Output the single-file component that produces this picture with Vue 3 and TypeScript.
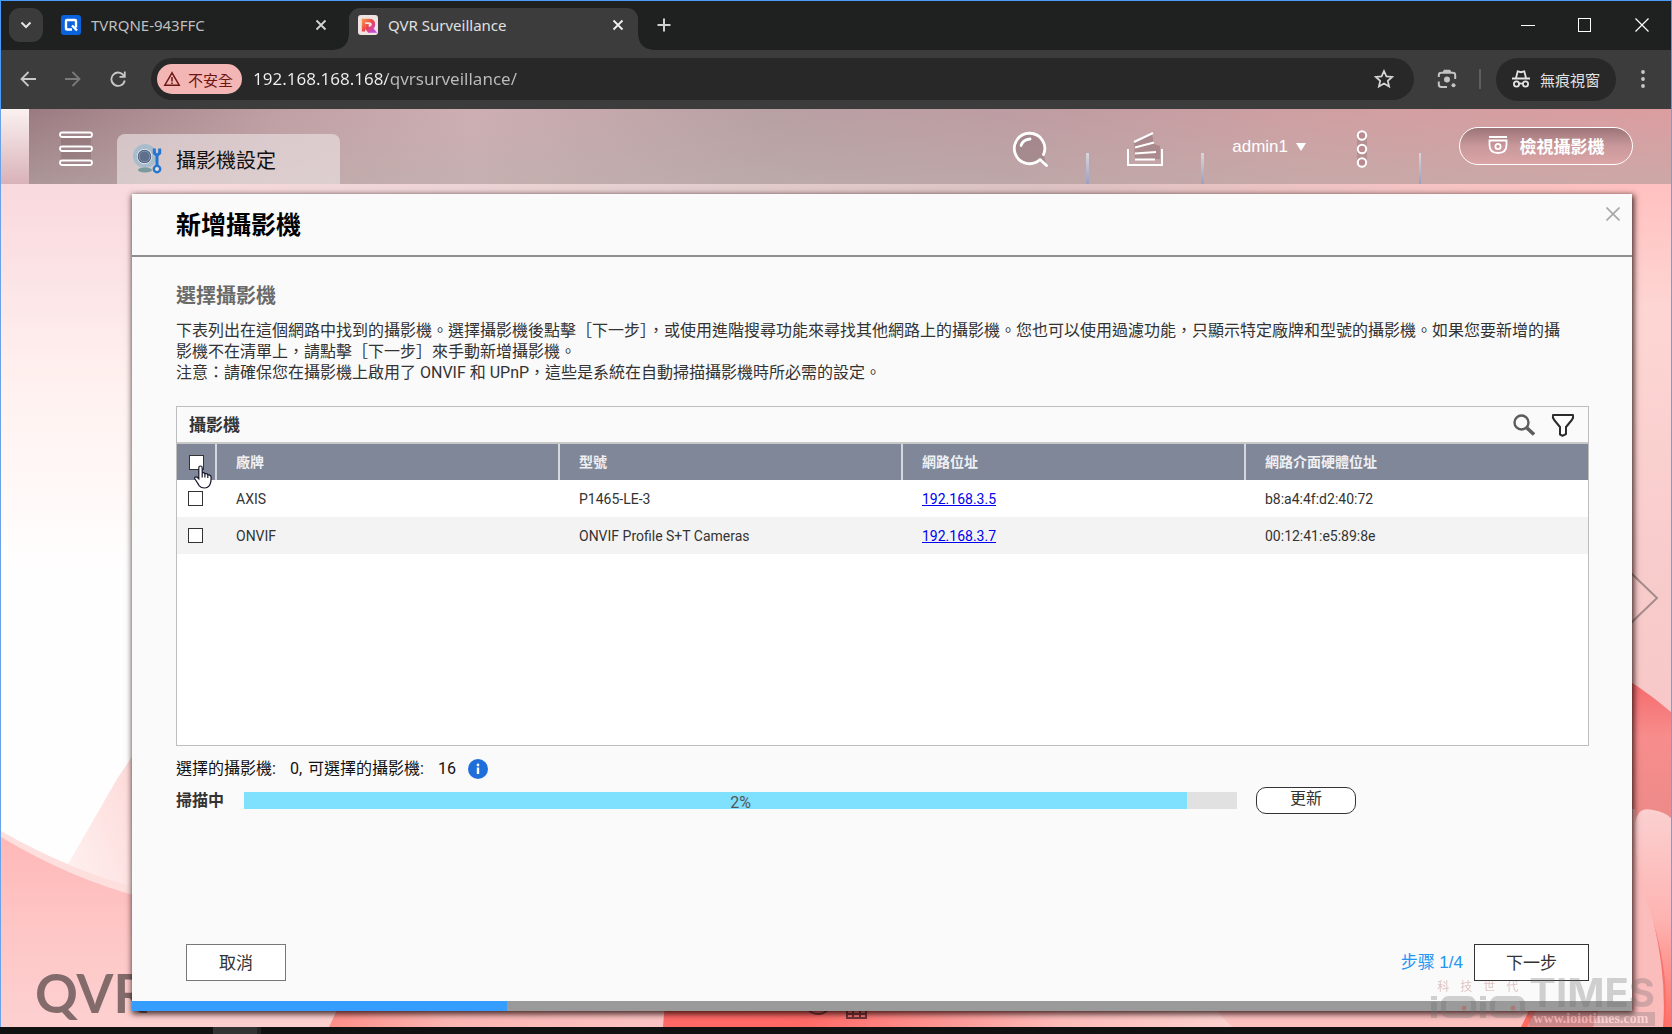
<script setup lang="ts">
import { computed, ref } from 'vue'

interface Camera {
  brand: string
  model: string
  ip: string
  mac: string
  selected: boolean
}

const url = ref('192.168.168.168/qvrsurveillance/')

const columns: string[] = ['廠牌', '型號', '網路位址', '網路介面硬體位址']

const cameras = ref<Camera[]>([
  { brand: 'AXIS', model: 'P1465-LE-3', ip: '192.168.3.5', mac: 'b8:a4:4f:d2:40:72', selected: false },
  { brand: 'ONVIF', model: 'ONVIF Profile S+T Cameras', ip: '192.168.3.7', mac: '00:12:41:e5:89:8e', selected: false },
])

const selectedCount = computed(() => cameras.value.filter((c) => c.selected).length)
const allSelected = computed({
  get: () => selectedCount.value === cameras.value.length,
  set: (on: boolean) => cameras.value.forEach((c) => (c.selected = on)),
})

const available = 16
const scanLabel = '2%'
const scanFill = 95
const step = 1
const stepCount = 4
</script>

<template>
  <div class="window">
    <header class="tabstrip">
      <button class="tab-search" aria-label="搜尋分頁">
        <svg width="12" height="8" viewBox="0 0 12 8"><path d="M1.5 1.5 6 6l4.500-4.500" fill="none" stroke="#e4e4e4" stroke-width="2" /></svg>
      </button>
      <div class="tab">
        <svg width="20" height="20" viewBox="0 0 20 20">
          <rect width="20" height="20" rx="3" fill="#0a63dc" />
          <path d="M11 14.500H6a1 1 0 0 1-1-1V6a1 1 0 0 1 1-1h8a1 1 0 0 1 1 1v6.500M11 10.500l5 5" fill="none" stroke="#fff" stroke-width="2.400" />
        </svg>
        <span class="tab-title">TVRQNE-943FFC</span>
        <button class="icon-btn" aria-label="關閉分頁">
          <svg width="12" height="12" viewBox="0 0 12 12"><path d="m1.500 1.500 9 9m0-9-9 9" stroke="#d5d5d5" stroke-width="1.800" /></svg>
        </button>
      </div>
      <div class="tab active">
        <svg width="20" height="20" viewBox="0 0 20 20">
          <defs>
            <linearGradient id="fav" x1="0" y1="0" x2="1" y2="1">
              <stop offset="0" stop-color="#f58a4c" /><stop offset=".5" stop-color="#ee3f4a" /><stop offset="1" stop-color="#c44be0" />
            </linearGradient>
          </defs>
          <rect width="20" height="20" rx="3" fill="#f0e4e2" />
          <path d="M5.500 16.500V5.500H11q4.500 0 4.500 4 0 2.500-2.500 3.500l2.500 3H11L9 13.500V9" fill="none" stroke="url(#fav)" stroke-width="3.400" />
        </svg>
        <span class="tab-title">QVR Surveillance</span>
        <button class="icon-btn" aria-label="關閉分頁">
          <svg width="12" height="12" viewBox="0 0 12 12"><path d="m1.500 1.500 9 9m0-9-9 9" stroke="#f0f0f0" stroke-width="1.800" /></svg>
        </button>
      </div>
      <button class="icon-btn new-tab" aria-label="新分頁">
        <svg width="14" height="14" viewBox="0 0 14 14"><path d="M7 .5v13M.5 7h13" stroke="#d0d0d0" stroke-width="2" /></svg>
      </button>
      <div class="win-controls">
        <button class="icon-btn" aria-label="最小化"><svg width="14" height="14"><path d="M0 7.500h14" stroke="#fff" /></svg></button>
        <button class="icon-btn" aria-label="最大化"><svg width="14" height="14"><rect x=".5" y=".5" width="12" height="13" fill="none" stroke="#fff" /></svg></button>
        <button class="icon-btn" aria-label="關閉"><svg width="14" height="14"><path d="m.5.5 13 13m0-13-13 13" stroke="#fff" stroke-width="1.200" /></svg></button>
      </div>
    </header>

    <nav class="toolbar">
      <button class="icon-btn" aria-label="上一頁"><svg width="16" height="16" viewBox="0 0 16 16"><path d="M8.500 1 1.500 8l7 7M1.500 8H16" fill="none" stroke="#c8c8c8" stroke-width="1.800" /></svg></button>
      <button class="icon-btn" aria-label="下一頁"><svg width="16" height="16" viewBox="0 0 16 16"><path d="m7.500 1 7 7-7 7M14.500 8H0" fill="none" stroke="#7a7a7a" stroke-width="1.800" /></svg></button>
      <button class="icon-btn" aria-label="重新載入"><svg width="16" height="16" viewBox="0 0 16 16"><path d="M14 5A6.700 6.700 0 1 0 14.700 9.500M14.800.5v5.300H9.500" fill="none" stroke="#c8c8c8" stroke-width="1.800" /></svg></button>
      <div class="omnibox">
        <button class="chip">
          <svg width="18" height="16" viewBox="0 0 18 16"><path d="M9 1.800 1.800 14.200h14.400zM9 6v4.500M9 11.500v1.500" fill="none" stroke="#6d1614" stroke-width="1.500" /></svg>
          不安全
        </button>
        <input v-model="url" class="url" type="text" aria-label="網址" />
        <button class="icon-btn" aria-label="加入書籤">
          <svg width="20" height="20" viewBox="0 0 20 20"><path d="m10 2 2.400 5.400 5.800.5-4.400 3.900 1.300 5.800L10 14.600l-5.100 3 1.300-5.800L1.800 7.900l5.800-.5z" fill="none" stroke="#d6d6d6" stroke-width="1.700" /></svg>
        </button>
      </div>
      <button class="icon-btn lens" aria-label="智慧鏡頭">
        <svg width="20" height="20" viewBox="0 0 20 20" fill="none" stroke="#c4c4c4" stroke-width="2">
          <path d="M1.800 8V6.200a2.400 2.400 0 0 1 2.400-2.400h11.600a2.400 2.400 0 0 1 2.400 2.400V10M1.800 12.500v3a2.400 2.400 0 0 0 2.400 2.400H10M6.500 3.500 7.500 1.800h5l1 1.700" />
          <circle cx="10" cy="10.500" r="3" fill="#c4c4c4" stroke="none" /><circle cx="16.500" cy="16.300" r="2" fill="#c4c4c4" stroke="none" />
        </svg>
      </button>
      <span class="bar-sep"></span>
      <button class="incognito">
        <svg width="18" height="18" viewBox="0 0 18 18" fill="none" stroke="#e3e3e3" stroke-width="1.800">
          <path d="M0 8.500h18M4 8l1.700-6.600 3.300.8 3.300-.8L14 8" /><circle cx="4.500" cy="14" r="2.600" /><circle cx="13.500" cy="14" r="2.600" /><path d="M7 13.500h4" />
        </svg>
        無痕視窗
      </button>
      <button class="icon-btn" aria-label="選單">
        <svg width="4" height="18" viewBox="0 0 4 18" fill="#c8c8c8"><circle cx="2" cy="2" r="1.900" /><circle cx="2" cy="9" r="1.900" /><circle cx="2" cy="16" r="1.900" /></svg>
      </button>
    </nav>

    <main class="desktop">
      <svg class="wallpaper" viewBox="0 0 1670 918" preserveAspectRatio="none" aria-hidden="true">
        <defs>
          <linearGradient id="base" x1="0" y1="0" x2="0" y2="1">
            <stop offset="0" stop-color="#f6d6da" /><stop offset=".1" stop-color="#f9dadf" /><stop offset=".3" stop-color="#fff1ef" /><stop offset=".5" stop-color="#fffefe" />
          </linearGradient>
          <linearGradient id="corner" x1="0" y1="0" x2="0" y2="1">
            <stop offset="0" stop-color="#fbf1f1" /><stop offset="1" stop-color="#d8b2b8" />
          </linearGradient>
          <linearGradient id="strip">
            <stop offset="0" stop-color="#f9dcdf" /><stop offset=".35" stop-color="#e6cfd0" /><stop offset=".6" stop-color="#dcc2c3" /><stop offset=".85" stop-color="#f5c4c4" /><stop offset="1" stop-color="#ffc1c0" />
          </linearGradient>
          <linearGradient id="side" x1="0" y1="0" x2="0" y2="1">
            <stop offset="0" stop-color="#ffb9b9" /><stop offset=".1" stop-color="#ffc3c2" /><stop offset=".22" stop-color="#fdd6d3" /><stop offset=".48" stop-color="#f8cccc" /><stop offset="1" stop-color="#f9c0c0" />
          </linearGradient>
          <linearGradient id="wave" x1="0" y1="0" x2="0" y2="1">
            <stop offset="0" stop-color="#ffb8b8" /><stop offset=".5" stop-color="#fec6c6" /><stop offset="1" stop-color="#fdd0d0" />
          </linearGradient>
          <linearGradient id="ray" x1="1" y1="0" x2="0" y2="1">
            <stop offset="0" stop-color="#fcd2d0" /><stop offset="1" stop-color="#fff6f6" />
          </linearGradient>
          <linearGradient id="coral" x1="0" y1="0" x2="0" y2="1">
            <stop offset="0" stop-color="#f55f62" /><stop offset=".2" stop-color="#f78d8c" /><stop offset=".5" stop-color="#e98a88" /><stop offset="1" stop-color="#ff6a60" />
          </linearGradient>
          <linearGradient id="petal" x1="0" y1="0" x2="0" y2="1">
            <stop offset="0" stop-color="#fbd0d0" /><stop offset=".5" stop-color="#fdb4b2" /><stop offset="1" stop-color="#ff6f66" />
          </linearGradient>
          <linearGradient id="floor">
            <stop offset="0" stop-color="#ff8e88" /><stop offset=".35" stop-color="#fbb6b3" /><stop offset="1" stop-color="#fbc4c4" />
          </linearGradient>
          <linearGradient id="floor2">
            <stop offset="0" stop-color="#ff6966" /><stop offset=".25" stop-color="#ff6a67" /><stop offset=".7" stop-color="#fdbcba" /><stop offset="1" stop-color="#fdd2d0" />
          </linearGradient>
        </defs>
        <rect width="1670" height="918" fill="url(#base)" />
        <rect width="28" height="75" fill="url(#corner)" />
        <rect x="132" width="1500" height="100" fill="url(#strip)" />
        <rect x="1620" width="50" height="918" fill="url(#side)" />
        <path d="M66 757 116 670l40-60v230z" fill="url(#ray)" />
        <path d="M0 722q70 40 140 58v140H0z" fill="#fde0de" />
        <path d="M0 728q70 42 140 60v130H0z" fill="url(#wave)" />
        <rect y="880" x="130" width="1540" height="38" fill="#fdd0d0" />
        <path d="M328 918l18-38h320v38z" fill="url(#floor)" />
        <path d="M662 918l3-38h530l36 38z" fill="url(#floor2)" />
        <path d="M1195 880h475v38h-439z" fill="#fcc2c0" />
        <path d="M1600 555q40 22 70 48v315h-150l30-60z" fill="url(#coral)" />
        <path d="M1600 880V700h34q2 60 18 110 14 60 10 108h-62z" fill="#fbbcbc" />
        <path d="M1634 720q0-24 18-19 12 2 18 8v209h-6q6-60-20-130-10-30-10-68z" fill="url(#petal)" />
        <path d="M1526 918q6-14 20-28h60v28z" fill="#ef8f8f" />
        <path d="M1606 880h56v38h-70z" fill="#fbbcbc" />
        <path d="m1630 464 26 25-26 25" fill="none" stroke="#a48c8c" stroke-width="2" />
        <path d="M806 899q4 6 11 6t10-5M846 898v12M865 898v12M845 905h21M845 909h21M852 898v11M859 898v11" fill="none" stroke="#5a2c30" stroke-width="2" opacity=".85" />
      </svg>
      <div class="qvr" aria-hidden="true">QVR</div>

      <div class="appbar">
        <button class="icon-btn burger" aria-label="主選單">
          <svg width="34" height="36" viewBox="0 0 34 36">
            <rect x="2" y="4" width="30" height="28" fill="#5b3f46" opacity=".22" />
            <g fill="#a2878c" stroke="#fff" stroke-width="1.800"><rect x="1" y="1.500" width="32" height="4.500" rx="2.200" /><rect x="1" y="15.500" width="32" height="4.500" rx="2.200" /><rect x="1" y="29.500" width="32" height="4.500" rx="2.200" /></g>
          </svg>
        </button>
        <a class="app-tab" href="#camera-settings">
          <svg width="30" height="30" viewBox="0 0 30 30">
            <circle cx="12" cy="12" r="12" fill="#a9bccb" /><ellipse cx="12" cy="26" rx="7" ry="2.500" fill="#7b9a9b" />
            <circle cx="11.500" cy="12.500" r="7.500" fill="#eef2f6" /><circle cx="11.500" cy="12.500" r="6.800" fill="#465673" /><circle cx="11.500" cy="12.500" r="5.400" fill="#5d6f8d" stroke="#8f9cb4" />
            <path d="M21.300 4.500v4.500L24 11.500 26.700 9V4.500M24 11v11" fill="none" stroke="#2476cf" stroke-width="3" /><circle cx="24" cy="25" r="3.200" fill="#e9e0e2" stroke="#2476cf" stroke-width="2.400" />
          </svg>
          攝影機設定
        </a>
        <div class="app-tools">
          <button class="icon-btn search" aria-label="搜尋">
            <svg width="36" height="36" viewBox="0 0 36 36" fill="none" stroke="#fff" stroke-linecap="round">
              <path d="M30.500 23.500A15.200 15.200 0 1 0 27 28.500l6.500 6" stroke-width="2.800" stroke-linejoin="round" fill="#5b3f46" fill-opacity=".25" /><path d="M8 14.500Q10 8.500 17 8" stroke-width="2.800" />
            </svg>
          </button>
          <span class="tick"></span>
          <button class="icon-btn tray" aria-label="工作">
            <svg width="36" height="36" viewBox="0 0 36 36" fill="none" stroke="#fff" stroke-width="2">
              <path d="M7 11 25 3l2 10 6 2v13H8z" fill="#5b3f46" opacity=".25" stroke="none" /><path d="M1 18v16h34V18M7 11l19-9M8 16.500l19-5M8 22.500 29 21M8 28.500h20" />
            </svg>
          </button>
          <span class="tick"></span>
          <button class="admin">admin1 <svg width="10" height="8" viewBox="0 0 10 8"><path d="M0 0h10L5 8z" fill="#fff" /></svg></button>
          <button class="icon-btn more" aria-label="更多">
            <svg width="12" height="38" viewBox="0 0 12 38"><rect x="1" y="5" width="10" height="28" fill="#5b3f46" opacity=".2" /><g fill="#b98a90" stroke="#fff" stroke-width="2"><circle cx="6" cy="5.500" r="4.200" /><circle cx="6" cy="19" r="4.200" /><circle cx="6" cy="32.500" r="4.200" /></g></svg>
          </button>
          <span class="tick thin"></span>
          <button class="view-cam">
            <svg width="20" height="20" viewBox="0 0 20 20" fill="none" stroke="#fff" stroke-width="1.800"><path d="M1 2h18M1.500 5.500h17v4.500q0 8-8.500 8t-8.500-8z" /><circle cx="10" cy="11.500" r="2.600" /></svg>
            檢視攝影機
          </button>
        </div>
      </div>

      <section class="dialog" aria-labelledby="dlg-title">
        <div class="dialog-head">
          <h1 id="dlg-title">新增攝影機</h1>
          <button class="icon-btn" aria-label="關閉對話框"><svg width="14" height="14"><path d="m.5.5 13 13m0-13-13 13" stroke="#a8a8a8" stroke-width="1.700" /></svg></button>
        </div>
        <div class="dialog-body">
          <h2>選擇攝影機</h2>
          <p class="intro">下表列出在這個網路中找到的攝影機。選擇攝影機後點擊［下一步］，或使用進階搜尋功能來尋找其他網路上的攝影機。您也可以使用過濾功能，只顯示特定廠牌和型號的攝影機。如果您要新增的攝影機不在清單上，請點擊［下一步］來手動新增攝影機。<br />注意：請確保您在攝影機上啟用了 ONVIF 和 UPnP，這些是系統在自動掃描攝影機時所必需的設定。</p>

          <div class="panel">
            <div class="panel-head">
              <h3>攝影機</h3>
              <button class="icon-btn" aria-label="進階搜尋"><svg width="22" height="22" viewBox="0 0 22 22" fill="none" stroke="#5c5c5c"><circle cx="8.500" cy="8.500" r="7" stroke-width="2.400" /><path d="m14 14 7 6.500" stroke-width="3.600" /></svg></button>
              <button class="icon-btn" aria-label="過濾"><svg width="24" height="24" viewBox="0 0 24 24"><path d="M2 2h20q.8 2.800-1.200 5L15 14v7l-3.500 1.800L9 21.500V14L3.200 7Q1.200 4.800 2 2z" fill="#fff" stroke="#2c2c2c" stroke-width="2" stroke-linejoin="round" /></svg></button>
            </div>
            <table>
              <thead>
                <tr>
                  <th class="check">
                    <input v-model="allSelected" type="checkbox" aria-label="全選" />
                    <svg class="pointer" width="20" height="24" viewBox="0 0 20 24"><path d="M6.500 1q1.700 0 1.700 1.800V8q1-.8 2.300 0 .3.300.4 1 1.300-.8 2.400 0 .4.400.5 1.100 1.500-.6 2.600.4.800.8.700 2.500 0 5.500-2 7.800-1.500 2.200-4.600 2.200-3.400 0-5.200-2.200L1 14q-.8-1.400.3-2 1.200-.5 2.200.5l1.300 1.300v-11Q4.800 1 6.500 1zM8.200 8v4.500M10.900 9v3.500M13.800 10v3" fill="#fff" stroke="#14142c" stroke-width="1.200" /></svg>
                  </th>
                  <th v-for="c in columns" :key="c" scope="col">{{ c }}</th>
                </tr>
              </thead>
              <tbody>
                <tr v-for="cam in cameras" :key="cam.mac">
                  <td class="check"><input v-model="cam.selected" type="checkbox" :aria-label="cam.brand" /></td>
                  <td>{{ cam.brand }}</td>
                  <td>{{ cam.model }}</td>
                  <td><a :href="'http://' + cam.ip">{{ cam.ip }}</a></td>
                  <td>{{ cam.mac }}</td>
                </tr>
              </tbody>
            </table>
          </div>

          <div class="counts">
            <span>選擇的攝影機:</span><span class="num">{{ selectedCount }},</span><span>可選擇的攝影機:</span><span class="num">{{ available }}</span>
            <button class="icon-btn info" aria-label="說明"><svg width="20" height="20" viewBox="0 0 20 20"><circle cx="10" cy="10" r="10" fill="#1e6fd9" /><circle cx="10" cy="6" r="1.400" fill="#fff" /><path d="M10 8.500V15" stroke="#fff" stroke-width="2.400" /></svg></button>
          </div>
          <div class="scan">
            <span class="scan-label">掃描中</span>
            <div class="bar" role="progressbar" aria-label="掃描中" :aria-valuetext="scanLabel">
              <div class="bar-fill" :style="{ width: scanFill + '%' }"></div>
              <span class="bar-text">{{ scanLabel }}</span>
            </div>
            <button class="refresh">更新</button>
          </div>

          <div class="actions">
            <button class="action cancel">取消</button>
            <span class="step">步骤 {{ step }}/{{ stepCount }}</span>
            <button class="action next">下一步</button>
          </div>
        </div>
        <div class="wizard-bar"><div class="wizard-fill" :style="{ width: (step / stepCount) * 100 + '%' }"></div></div>
      </section>

      <div class="watermark" aria-hidden="true">
        <div class="wm-left">
          <div class="wm-cjk"><span>科</span><span>技</span><span>世</span><span>代</span></div>
          <svg width="94" height="22" viewBox="0 0 94 22">
            <g fill="#6e6e6e"><path d="M0 0h6v4H0zM0 6h6v16H0zM49 0h6v4h-6zM49 6h6v16h-6z" /></g>
            <g fill="none" stroke="#6e6e6e" stroke-width="5"><rect x="12.500" y="2.500" width="30" height="17" rx="5" /><rect x="61.500" y="2.500" width="30" height="17" rx="5" /></g>
            <circle cx="33" cy="12" r="2.500" fill="#c0392b" /><circle cx="82" cy="12" r="2.500" fill="#c0392b" />
          </svg>
        </div>
        <div class="wm-right">
          <div class="wm-times">TIMES</div>
          <div class="wm-url">www.ioiotimes.com</div>
        </div>
      </div>
    </main>
    <footer class="taskbar"><span></span></footer>
  </div>
</template>

<style>
body {
  margin: 0;
  background: #111;
}
</style>

<style scoped>
* {
  box-sizing: border-box;
}
.window {
  display: flex;
  flex-direction: column;
  min-height: 100vh;
  overflow: hidden;
  background: #3c3c3c;
  font-family: Roboto, "Noto Sans CJK TC", sans-serif;
  color: #333;
}
button {
  font-family: inherit;
  cursor: pointer;
}
svg {
  display: block;
  flex: none;
}
.icon-btn {
  flex: none;
  display: flex;
  padding: 0;
  border: 0;
  background: none;
}

/* browser tabs */
.tabstrip {
  display: flex;
  align-items: stretch;
  height: 50px;
  padding: 7px 22px 0 8px;
  border: 1px solid #4a9cf8;
  border-bottom: 0;
  background: #1f2120;
  font-family: "Noto Sans", "Noto Sans CJK TC", sans-serif;
}
.tab-search {
  display: flex;
  align-items: center;
  justify-content: center;
  width: 34px;
  height: 34px;
  border: 0;
  border-radius: 11px;
  background: #3b3b3b;
}
.tab {
  display: flex;
  align-items: center;
  gap: 10px;
  width: 289px;
  padding: 0 15px 9px 16px;
  margin-left: 2px;
  color: #bfbfbf;
  font-size: 15px;
  line-height: 20px;
}
.tab:not(.active) {
  width: 304px;
  padding-right: 22px;
}
.tab-title {
  flex: 1;
  white-space: nowrap;
}
.tab.active {
  position: relative;
  margin-left: 0;
  padding: 0 14px 9px 9px;
  border-radius: 11px 11px 0 0;
  background: #3c3c3c;
  color: #e0e0e0;
}
.tab.active::before,
.tab.active::after {
  content: "";
  position: absolute;
  bottom: 0;
  width: 14px;
  height: 14px;
}
.tab.active::before {
  right: 100%;
  background: radial-gradient(circle at 0 0, #1f2120 13px, #3c3c3c 14px);
}
.tab.active::after {
  left: 100%;
  background: radial-gradient(circle at 100% 0, #1f2120 13px, #3c3c3c 14px);
}
.new-tab {
  margin: 10px 0 0 19px;
  align-self: flex-start;
}
.win-controls {
  display: flex;
  align-items: center;
  gap: 43px;
  height: 34px;
  margin-left: auto;
}

/* browser toolbar */
.toolbar {
  display: flex;
  align-items: center;
  height: 59px;
  padding: 0 26px 1px 19px;
  border: solid #4a9cf8;
  border-width: 0 1px;
  background: #3c3c3c;
  font-family: "Noto Sans", "Noto Sans CJK TC", sans-serif;
}
.toolbar > .icon-btn + .icon-btn {
  margin-left: 29px;
}
.omnibox {
  flex: 1;
  display: flex;
  align-items: center;
  height: 42px;
  margin-left: 25px;
  padding: 0 20px 0 6px;
  border-radius: 21px;
  background: #282828;
}
.chip {
  display: flex;
  align-items: center;
  gap: 7px;
  height: 30px;
  padding: 0 9px 0 6px;
  border: 0;
  border-radius: 15px;
  background: #f4b6b4;
  color: #6d1614;
  font-size: 15px;
}
.url {
  flex: 1;
  min-width: 0;
  padding: 0;
  margin-left: 11px;
  border: 0;
  outline: 0;
  background: linear-gradient(90deg, #f0f0f0 134px, #bcbcbc 134px);
  background-clip: text;
  color: transparent;
  font: 17px/24px "Noto Sans", sans-serif;
}
.lens {
  margin-left: 23px;
}
.bar-sep {
  width: 2px;
  height: 20px;
  margin: 0 15px 0 22px;
  background: #5e5e5e;
}
.incognito {
  display: flex;
  align-items: center;
  gap: 10px;
  height: 43px;
  margin-right: 25px;
  padding: 0 16px;
  border: 0;
  border-radius: 22px;
  background: #282828;
  color: #e3e3e3;
  font-size: 15px;
}

/* QVR desktop */
.desktop {
  position: relative;
  flex: 1;
  display: flex;
  flex-direction: column;
  border: solid #6aa2ea;
  border-width: 0 1px;
}
.wallpaper {
  position: absolute;
  inset: 0;
  width: 100%;
  height: 100%;
}
.qvr {
  position: absolute;
  left: 34px;
  bottom: 2px;
  color: #836b6c;
  font: bold 53px/64px Lato, sans-serif;
}
.appbar {
  position: relative;
  display: flex;
  align-items: stretch;
  height: 75px;
  margin-left: 28px;
  padding: 0 38px 0 30px;
  background: linear-gradient(180deg, rgba(150, 120, 125, 0) 0%, rgba(190, 178, 174, 0.5) 100%),
    linear-gradient(90deg, #9a7a80 0%, #c09fa4 15%, #cdaeb3 27%, #b8a0a3 45%, #bd9ca2 60%, #cf9fa2 77%, #dc9da0 100%);
}
.appbar .burger {
  align-self: flex-start;
  margin-top: 22px;
}
.app-tab {
  display: flex;
  align-items: center;
  gap: 13px;
  align-self: flex-end;
  width: 223px;
  height: 50px;
  margin-left: 24px;
  padding-left: 16px;
  border-radius: 8px 8px 0 0;
  background: rgba(235, 225, 226, 0.65);
  color: #111;
  font-size: 20px;
  text-decoration: none;
}
.app-tools {
  display: flex;
  align-items: flex-start;
  margin-left: auto;
}
.tick {
  align-self: flex-end;
  width: 3px;
  height: 31px;
  background: linear-gradient(#d9d6da, #9ba0c2);
}
.tick.thin {
  width: 2px;
}
.search {
  margin: 22px 37px 0 0;
}
.tray {
  margin: 22px 38px 0;
}
.admin {
  display: flex;
  align-items: center;
  gap: 8px;
  margin: 28px 50px 0 28px;
  padding: 0;
  border: 0;
  background: none;
  color: #fff;
  font: 17px/20px "Liberation Sans", Arial, sans-serif;
}
.more {
  margin: 21px 51px 0 0;
}
.view-cam {
  display: flex;
  align-items: center;
  justify-content: center;
  gap: 12px;
  width: 174px;
  height: 38px;
  margin: 18px 0 0 38px;
  padding: 0 0 2px;
  border: 1px solid #fff;
  border-radius: 19px;
  background: linear-gradient(#9c7478, #c9989b 50%, #dba5a5);
  color: #fff;
  font-size: 17px;
  font-weight: bold;
}

/* wizard dialog */
.dialog {
  position: relative;
  flex: 1;
  display: flex;
  flex-direction: column;
  margin: 10px 39px 16px 131px;
  background: #fafafa;
  box-shadow: 1px 2px 6px 1px rgba(20, 0, 0, 0.8);
}
.dialog-head {
  display: flex;
  align-items: flex-start;
  justify-content: space-between;
  height: 63px;
  padding: 13px 12px 0 44px;
  border-bottom: 2px solid #8e8e8e;
}
h1,
h2,
h3,
p {
  margin: 0;
}
h1 {
  color: #000;
  font-size: 25px;
  line-height: 38px;
}
.dialog-body {
  flex: 1;
  display: flex;
  flex-direction: column;
  padding: 24px 43px 20px 44px;
}
h2 {
  color: #6a6a6a;
  font-size: 20px;
  line-height: 30px;
}
.intro {
  margin-top: 9px;
  padding-right: 16px;
  font-size: 16px;
  line-height: 21px;
}
.panel {
  min-height: 340px;
  margin-top: 23px;
  border: 1px solid #bebebe;
  background: #fff;
}
.panel-head {
  display: flex;
  align-items: center;
  gap: 16px;
  height: 37px;
  padding: 0 13px 0 12px;
  border-bottom: 2px solid #c6c9c8;
  background: #fafafa;
}
h3 {
  flex: 1;
  padding-bottom: 2px;
  font-size: 17px;
}
table {
  width: 100%;
  border-spacing: 0;
  table-layout: fixed;
  font-size: 14px;
}
th,
td {
  height: 37px;
  padding: 0 0 0 21px;
  text-align: left;
}
th {
  width: 343px;
  height: 36px;
  padding: 0 0 2px 19px;
  border-left: 2px solid #d5d8dd;
  background: #808798;
  color: #eef0f4;
}
th:last-child {
  width: auto;
}
.check {
  width: 38px;
  padding: 0 0 0 11px;
}
th.check {
  position: relative;
  width: 38px;
  padding: 0 0 0 12px;
  border-left: 0;
}
tbody tr:nth-child(even) {
  background: #f3f3f3;
}
td a {
  color: #0000ee;
}
input[type="checkbox"] {
  appearance: none;
  display: block;
  width: 15px;
  height: 15px;
  margin: 0;
  border: 1px solid #333;
  background: #fff;
}
.pointer {
  position: absolute;
  left: 17px;
  top: 21px;
  z-index: 1;
}
.counts {
  display: flex;
  align-items: center;
  margin-top: 11px;
  color: #111;
  font-size: 16px;
  line-height: 24px;
}
.num {
  margin: 0 6px 0 14px;
}
.info {
  margin-left: 6px;
}
.scan {
  display: flex;
  align-items: center;
  margin-top: 6px;
}
.scan-label {
  width: 68px;
  padding-bottom: 3px;
  font-size: 16px;
  font-weight: bold;
}
.bar {
  position: relative;
  flex: 0 1 993px;
  height: 17px;
  background: #e1e1e1;
}
.bar-fill {
  height: 100%;
  background: #80e1ff;
}
.bar-text {
  position: absolute;
  inset: 0;
  color: #555;
  font-size: 16px;
  line-height: 21px;
  text-align: center;
}
.refresh {
  width: 100px;
  height: 27px;
  margin-left: 19px;
  padding: 0 0 3px;
  border: 1px solid #333;
  border-radius: 10px;
  background: #fff;
  color: #333;
  font-size: 16px;
  line-height: 22px;
}
.actions {
  display: flex;
  align-items: center;
  margin-top: auto;
  padding-left: 10px;
}
.action {
  height: 37px;
  padding: 0 0 3px;
  border: 1px solid #333;
  background: #fff;
  color: #333;
  font-size: 17px;
}
.cancel {
  width: 100px;
  margin-right: auto;
  border-color: #777;
}
.next {
  width: 115px;
}
.step {
  margin-right: 11px;
  padding-bottom: 4px;
  color: #2196f3;
  font-family: "Liberation Sans", "Noto Sans CJK TC", sans-serif;
  font-size: 17px;
}
.wizard-bar {
  height: 10px;
  background: #9a9a9a;
}
.wizard-fill {
  height: 100%;
  background: #359dff;
}

/* photo credit over the corner */
.watermark {
  position: absolute;
  right: 16px;
  bottom: 1px;
  display: flex;
  align-items: flex-start;
  gap: 4px;
  opacity: 0.3;
  pointer-events: none;
}
.wm-cjk {
  display: flex;
  gap: 11px;
  padding: 6px 6px 2px;
  color: #a04040;
  font-size: 12px;
  line-height: 14px;
}
.wm-times {
  color: #6e6e6e;
  font: bold 40px/38px Inter, sans-serif;
}
.wm-url {
  padding: 0 4px;
  background: #777;
  color: #fff;
  font: bold 14px/14px "Liberation Serif", serif;
}
.taskbar {
  height: 7px;
  padding-left: 199px;
  background: #111;
}
.taskbar span {
  display: block;
  width: 48px;
  height: 100%;
  margin-left: 14px;
  border-right: 4px solid #222;
  background: #333;
}
</style>
